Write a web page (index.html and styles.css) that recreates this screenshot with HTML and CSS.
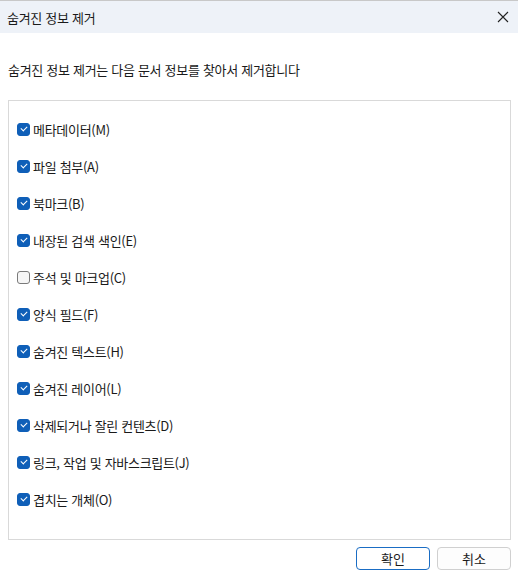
FILE: index.html
```html
<!DOCTYPE html>
<html lang="ko">
<head>
    <meta charset="UTF-8">
    <title>숨겨진 정보 제거</title>
    <link rel="stylesheet" href="styles.css">
</head>
<body>
    <div class="titlebar">
        <span class="title">숨겨진 정보 제거</span>
        <svg class="close" width="12" height="12" viewBox="0 0 12 12">
            <path d="M1 1 L11 11 M11 1 L1 11" stroke="#222" stroke-width="1.1" fill="none"/>
        </svg>
    </div>

    <p class="desc">숨겨진 정보 제거는 다음 문서 정보를 찾아서 제거합니다</p>

    <div class="panel">
        <label class="row"><span class="box on"></span>메타데이터(M)</label>
        <label class="row"><span class="box on"></span>파일 첨부(A)</label>
        <label class="row"><span class="box on"></span>북마크(B)</label>
        <label class="row"><span class="box on"></span>내장된 검색 색인(E)</label>
        <label class="row"><span class="box"></span>주석 및 마크업(C)</label>
        <label class="row"><span class="box on"></span>양식 필드(F)</label>
        <label class="row"><span class="box on"></span>숨겨진 텍스트(H)</label>
        <label class="row"><span class="box on"></span>숨겨진 레이어(L)</label>
        <label class="row"><span class="box on"></span>삭제되거나 잘린 컨텐츠(D)</label>
        <label class="row"><span class="box on"></span>링크, 작업 및 자바스크립트(J)</label>
        <label class="row"><span class="box on"></span>겹치는 개체(O)</label>
    </div>

    <div class="buttons">
        <button class="btn primary">확인</button>
        <button class="btn">취소</button>
    </div>
</body>
</html>
```

FILE: styles.css
```css
body {
    margin: 0;
    background: #fff;
    color: #1a1a1a;
    font-family: "Noto Sans CJK KR", "Noto Sans", sans-serif;
    font-size: 13px;
}
.titlebar {
    height: 32px;
    border-top: 1px solid #c8c8c8;
    background: #eef2f8;
    display: flex;
    align-items: center;
    justify-content: space-between;
    padding: 0 8px 0 7px;
}
.title {
    font-size: 13px;
    letter-spacing: -0.3px;
}
.close {
    margin-right: 1px;
}
.desc {
    margin: 28px 0 0 8px;
    line-height: 18px;
    letter-spacing: -0.3px;
}
.panel {
    margin: 21px 7px 0 8px;
    height: 428px;
    border: 1px solid #d9d9d9;
    padding: 10px 0 0 8px;
    display: flex;
    flex-direction: column;
}
.row {
    display: flex;
    align-items: center;
    gap: 3px;
    height: 37px;
    letter-spacing: -0.3px;
}
.box {
    width: 13px;
    height: 13px;
    box-sizing: border-box;
    border-radius: 3px;
    border: 1px solid #7a7a7a;
    background: #f6f6f6;
    position: relative;
}
.box.on {
    border-color: #0f5fb8;
    background: #0f5fb8;
}
.box.on::after {
    content: "";
    position: absolute;
    left: 3px;
    top: 2px;
    width: 5px;
    height: 3px;
    border-left: 1px solid #fff;
    border-bottom: 1px solid #fff;
    transform: rotate(-45deg);
}
.buttons {
    display: flex;
    justify-content: flex-end;
    gap: 7px;
    margin: 7px 7px 0 0;
}
.btn {
    width: 74px;
    height: 23px;
    font-family: inherit;
    font-size: 13px;
    color: #1a1a1a;
    background: #fdfdfd;
    border: 1px solid #d0d0d0;
    border-radius: 4px;
    padding: 0;
}
.btn.primary {
    border: 1px solid #1a6dc4;
    background: #fff;
}
```
